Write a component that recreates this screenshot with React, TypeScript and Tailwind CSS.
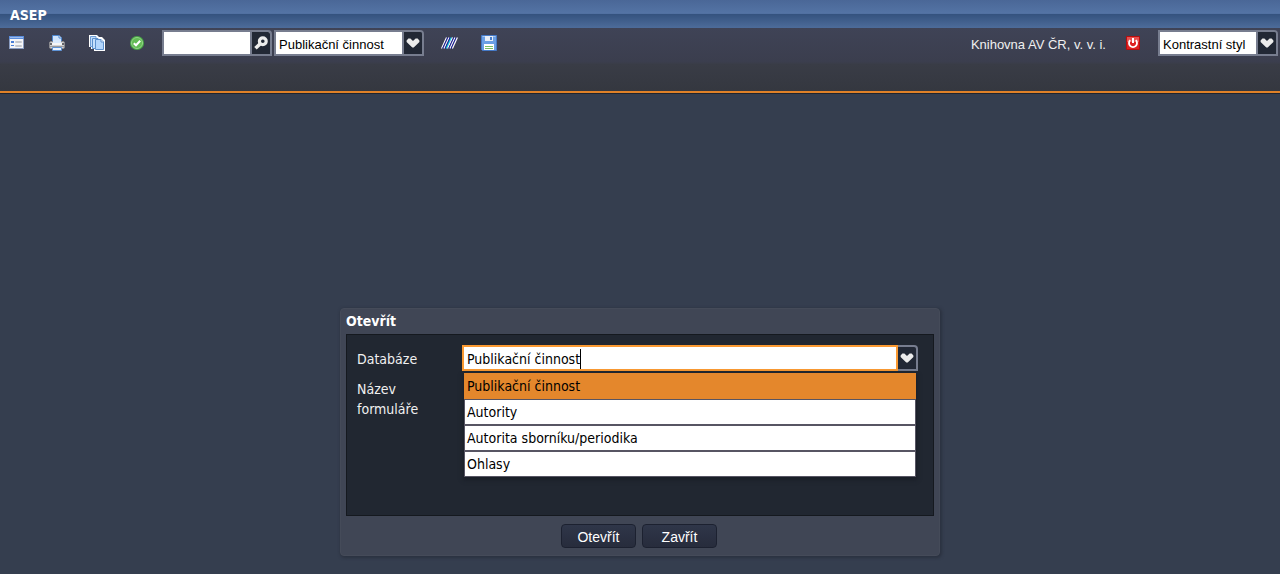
import { useState, type ReactNode } from "react";

const databases = ["Publikační činnost", "Autority", "Autorita sborníku/periodika", "Ohlasy"];

function ToolButton({ label, children }: { label: string; children: ReactNode }) {
  return (
    <button type="button" aria-label={label} className="flex h-6 w-6 items-center justify-center">
      {children}
    </button>
  );
}

function Heart() {
  return (
    <svg viewBox="0 0 14 10" className="h-[10px] w-[14px]" shapeRendering="geometricPrecision">
      <path d="M2.4 .6 4.4 .6 7 3 9.6 .6H11.6L13.4 2.4V4L7.7 9.5H6.3L.6 4V2.4Z" fill="#ececec" />
    </svg>
  );
}

function FormIcon() {
  return (
    <svg viewBox="0 0 16 16" className="h-4 w-4">
      <rect x=".5" y="1.5" width="14" height="12" fill="#f4f5f8" stroke="#8a9cc0" />
      <path d="M0 1H15V4H0Z" fill="#5b8ddb" />
      <path d="M1 2H14V3H1Z" fill="#9dbcec" />
      <path d="M2 6H5V8H2ZM2 10H5V11H2Z" fill="#4a7fd6" />
      <path d="M6.5 6.5H12.5V7.5H6.5ZM6.5 10.5H12.5V11.5H6.5Z" fill="#fff" stroke="#c3c6cc" />
    </svg>
  );
}

function PrinterIcon() {
  return (
    <svg viewBox="0 0 16 16" className="h-4 w-4">
      <path d="M3.5 .5H10L12.5 3V8H3.5Z" fill="#cfe4fc" stroke="#4c86cf" />
      <path d="M10 .5V3H12.5" fill="#fff" stroke="#4c86cf" />
      <rect x=".5" y="6.5" width="15" height="7" rx="1.5" fill="#d2d2d3" stroke="#8a8a8e" />
      <path d="M4 5H12V8H4Z" fill="#d9eafd" />
      <path d="M1 8H3V10H1ZM13 8H15V10H13Z" fill="#66676b" />
      <path d="M3 8H13V10H3Z" fill="#f6f6f6" />
      <path d="M1 11H15V12H1Z" fill="#9a9a9c" />
      <path d="M3.5 12.5H12.5V15.5H3.5Z" fill="#e9f3ff" stroke="#5e93d6" />
    </svg>
  );
}

function CopyIcon() {
  return (
    <svg viewBox="0 0 16 16" className="h-4 w-4">
      <path d="M0 0H8L10 2H13L16 5V16H5V14H2V12H0Z" fill="#fff" />
      <path d="M1.5 1.5H7V11.5H1.5Z" fill="#c3defb" stroke="#6f9fd6" />
      <path d="M3.5 3.5H9V13.5H3.5Z" fill="#c5e0fc" stroke="#5c90cc" />
      <path d="M6.5 4.5H12L14.5 7V14.5H6.5Z" fill="#b3d6fc" stroke="#5c90cc" />
      <path d="M12 4.5V7H14.5" fill="#fff" stroke="#5c90cc" />
    </svg>
  );
}

function CheckIcon() {
  return (
    <svg viewBox="0 0 16 16" className="h-4 w-4">
      <circle cx="8" cy="8" r="7" fill="#48a845" />
      <circle cx="8" cy="8" r="5.5" fill="#62bb55" stroke="#94d488" />
      <path d="M4.8 8.2 7 10.3 11.2 5.8" fill="none" stroke="#fff" strokeWidth="2" />
    </svg>
  );
}

function StripesIcon() {
  const stripes = [
    { x: 0.5, c: "#fff" },
    { x: 1.8, c: "#1a1f9c" },
    { x: 3, c: "#fff" },
    { x: 4.2, c: "#1a1f9c" },
    { x: 5.4, c: "#12d8ee" },
    { x: 6.6, c: "#fff" },
    { x: 7.8, c: "#1a1f9c" },
    { x: 9, c: "#fff" },
    { x: 10.2, c: "#1a1f9c" },
    { x: 11.4, c: "#fff" },
  ];
  return (
    <svg viewBox="0 0 17 12" className="h-3 w-[17px]">
      {stripes.map(({ x, c }) => (
        <path key={x} d={`M${x} 11.5 L${x + 5} .5`} stroke={c} strokeWidth="1.2" />
      ))}
    </svg>
  );
}

function SaveIcon() {
  return (
    <svg viewBox="0 0 16 16" className="h-4 w-4">
      <path d="M.5 .5H15.5V15.5H1.5L.5 14.5Z" fill="#6a9fe4" stroke="#4579c6" />
      <path d="M1.5 1.5H14.5" stroke="#a3c6f3" />
      <path d="M4 1H12V6H4Z" fill="#e8eef7" />
      <path d="M9 2H11V5H9Z" fill="#4a80cc" />
      <path d="M3 9H13V15H3Z" fill="#fff" />
      <path d="M4 11H12V12H4ZM4 13H12V14H4Z" fill="#79bf62" />
    </svg>
  );
}

function PowerIcon() {
  return (
    <svg viewBox="0 0 14 14" className="h-[14px] w-[14px]">
      <rect width="14" height="14" rx="1" fill="#b80d0d" />
      <rect x="1" y="1" width="12" height="12" fill="#dd2020" />
      <path d="M1 1H13V6H1Z" fill="#e85050" />
      <path d="M4.2 4.2A4 4 0 1 0 9.8 4.2" fill="none" stroke="#fff" strokeWidth="1.8" />
      <path d="M7 2V7" stroke="#fff" strokeWidth="2" />
    </svg>
  );
}

function ToolbarSelect({ label, options, className }: { label: string; options: string[]; className: string }) {
  return (
    <div className={`grid h-[26px] grid-cols-[1fr_20px] overflow-hidden rounded-tr border-2 border-[#777d8f] bg-[#222835] ${className}`}>
      <select
        aria-label={label}
        className="col-span-2 col-start-1 row-start-1 h-full appearance-none bg-[linear-gradient(to_left,#222835_18px,#777d8f_18px,#777d8f_20px,#fff_20px)] pl-[3px] pt-1 text-[13px] leading-4 text-black outline-none"
      >
        {options.map((o) => (
          <option key={o}>{o}</option>
        ))}
      </select>
      <span className="pointer-events-none col-start-2 row-start-1 flex items-center justify-center self-center pl-0.5">
        <Heart />
      </span>
    </div>
  );
}

export default function App() {
  const [value, setValue] = useState(databases[0]);
  return (
    <div className="flex min-h-screen flex-col bg-[#353e4f] font-['Liberation_Sans',sans-serif]">
      <header className="flex h-7 items-center bg-[linear-gradient(#4a6797_0%,#5474a5_48%,#34527e_50%,#4d6c9a_100%)] px-[10px] pt-0.5">
        <h1 className="font-['DejaVu_Sans_Condensed','DejaVu_Sans',sans-serif] text-[14px] font-bold text-white">ASEP</h1>
      </header>

      <div className="h-[66px] border-b border-[#20252e] bg-[linear-gradient(#3f4356_0%,#3b3e4e_52%,#393c46_56%,#34373f_100%)]">
        <div className="flex h-[65px] items-start border-b-2 border-[#e08128] pl-[5px] pr-0.5 pt-0.5">
          <div className="flex h-[26px] items-center gap-4">
            <ToolButton label="Formulář"><FormIcon /></ToolButton>
            <ToolButton label="Tisk"><PrinterIcon /></ToolButton>
            <ToolButton label="Kopírovat"><CopyIcon /></ToolButton>
            <ToolButton label="Potvrdit"><CheckIcon /></ToolButton>
          </div>
          <div className="ml-[13px] flex h-[26px] w-[110px] overflow-hidden rounded-tr border-2 border-[#777d8f] bg-white">
            <input aria-label="Hledat" className="min-w-0 flex-1 px-1 text-[13px] outline-none" />
            <button type="button" aria-label="Hledat" className="flex w-5 items-center justify-center border-l-2 border-[#777d8f] bg-[#222835]">
              <svg viewBox="0 0 14 14" className="h-[14px] w-[14px]" fill="none" stroke="#ececec">
                <circle cx="8.8" cy="5.2" r="3.4" strokeWidth="3.2" />
                <path d="M6 8 1.5 12.2" strokeWidth="3.6" />
              </svg>
            </button>
          </div>
          <ToolbarSelect label="Databáze pro hledání" options={databases} className="ml-0.5 w-[150px]" />
          <div className="ml-[13px] flex h-[26px] items-center gap-4">
            <ToolButton label="Seznam"><StripesIcon /></ToolButton>
            <ToolButton label="Uložit"><SaveIcon /></ToolButton>
          </div>
          <div className="ml-auto flex h-[26px] items-center">
            <span className="mr-[15px] pt-1 text-[13px] leading-4 text-[#f0f0f0]">Knihovna AV ČR, v. v. i.</span>
            <ToolButton label="Odhlásit"><PowerIcon /></ToolButton>
          </div>
          <ToolbarSelect label="Styl" options={["Kontrastní styl"]} className="ml-[13px] w-[120px]" />
        </div>
      </div>

      <main className="flex flex-1 items-end justify-center pb-[18px]">
        <section role="dialog" aria-labelledby="dialog-title" className="w-[600px] rounded-sm border border-[#454b59] bg-[#404655] px-[5px] pb-[7px] font-['DejaVu_Sans_Condensed','DejaVu_Sans',sans-serif] shadow-[1px_1px_3px_1px_#2b3240]">
          <h2 id="dialog-title" className="flex h-[25px] items-center text-[14px] font-bold text-white">Otevřít</h2>
          <div className="grid h-[182px] grid-cols-[105px_1fr] content-start gap-y-2 border border-[#15191f] bg-[#212731] px-[10px] pt-[10px] text-[14px] leading-5 text-[#f0f0f0]">
            <label htmlFor="database" className="pt-1">Databáze</label>
            <div className="relative mr-[5px] flex h-[26px]">
              <input
                id="database"
                role="combobox"
                aria-expanded="true"
                aria-controls="database-list"
                value={value}
                onChange={(e) => setValue(e.target.value)}
                className="min-w-0 flex-1 border-2 border-[#fb9a32] bg-white px-[3px] pt-0.5 text-black outline-none"
              />
              <span className="absolute left-[118px] top-1 h-5 w-px bg-black" />
              <button type="button" aria-label="Rozbalit" className="flex w-5 items-center justify-center rounded-tr border-2 border-l-0 border-[#777d8f] bg-[#222835]">
                <Heart />
              </button>
              <ul id="database-list" role="listbox" className="absolute inset-x-0.5 top-7 z-10 bg-[#575563] text-black shadow-[0_2px_4px_1px_#191e27]">
                {databases.map((d) => (
                  <li
                    key={d}
                    role="option"
                    aria-selected={d === value}
                    onClick={() => setValue(d)}
                    className={`flex h-[26px] items-center border px-0.5 ${d === value ? "border-[#e4872c] bg-[#e4872c]" : "border-[#575563] bg-white"}`}
                  >
                    {d}
                  </li>
                ))}
              </ul>
            </div>
            <div className="w-20">Název formuláře</div>
          </div>
          <div className="flex justify-center gap-1.5 pr-0.5 pt-2 font-['Liberation_Sans',sans-serif] text-[14px] text-white">
            {["Otevřít", "Zavřít"].map((t) => (
              <button key={t} type="button" className="h-6 w-[75px] rounded border border-[#1c2130] bg-linear-to-b from-[#2f3649] to-[#272c3c] pt-0.5">
                {t}
              </button>
            ))}
          </div>
        </section>
      </main>
    </div>
  );
}
